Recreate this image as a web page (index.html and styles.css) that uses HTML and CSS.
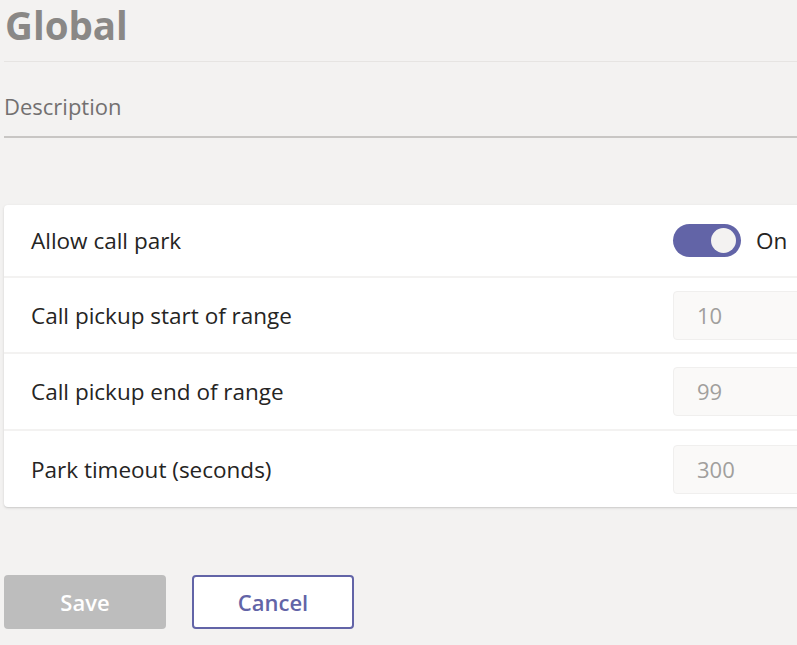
FILE: index.html
```html
<!DOCTYPE html>
<html>
<head>
<meta charset="utf-8">
<link rel="stylesheet" href="styles.css">
</head>
<body>
<div class="page">
  <h1 class="title">Global</h1>
  <div class="rule"></div>
  <div class="desc">Description</div>
  <div class="card">
    <div class="row first">
      <div class="label">Allow call park</div>
      <div class="control">
        <span class="toggle"><span class="knob"></span></span>
        <span class="state">On</span>
      </div>
    </div>
    <div class="row second">
      <div class="label">Call pickup start of range</div>
      <div class="control"><div class="input">10</div></div>
    </div>
    <div class="row">
      <div class="label">Call pickup end of range</div>
      <div class="control"><div class="input">99</div></div>
    </div>
    <div class="row last">
      <div class="label">Park timeout (seconds)</div>
      <div class="control"><div class="input">300</div></div>
    </div>
  </div>
  <div class="actions">
    <button class="btn save">Save</button>
    <button class="btn cancel">Cancel</button>
  </div>
</div>
</body>
</html>
```
FILE: styles.css
```css
html, body {
  margin: 0;
  padding: 0;
  background: #f3f2f1;
  overflow: hidden;
  width: 797px;
  height: 645px;
}
body {
  font-family: "Open Sans", "Noto Sans", sans-serif;
  color: #252423;
}
.page {
  padding-left: 4px;
  width: 793px;
  overflow: hidden;
}
.title {
  margin: 0;
  height: 61px;
  font-size: 38.5px;
  line-height: 50px;
  font-weight: 700;
  color: #8a8886;
  padding-left: 1px;
  box-sizing: border-box;
}
.rule {
  height: 1px;
  background: #e6e4e2;
}
.desc {
  height: 76px;
  box-sizing: border-box;
  padding-top: 29px;
  font-size: 22px;
  line-height: 30px;
  color: #727070;
  border-bottom: 2px solid #c8c6c4;
}
.card {
  margin-top: 67px;
  background: #ffffff;
  border-radius: 4px 0 0 4px;
  box-shadow: 0 1px 3px rgba(0,0,0,0.12), 0 1px 1px rgba(0,0,0,0.06);
  margin-right: -4px;
}
.row {
  display: grid;
  grid-template-columns: 642px 1fr;
  align-items: center;
  height: 77px;
  padding-left: 27px;
  border-bottom: 2px solid #f3f2f1;
  box-sizing: border-box;
  overflow: hidden;
}
.row.first {
  height: 73px;
}
.row.second {
  height: 76px;
}
.row.last {
  border-bottom: none;
  height: 76px;
}
.label {
  font-size: 22.5px;
  color: #252423;
  white-space: nowrap;
}
.control {
  display: flex;
  align-items: center;
}
.toggle {
  flex: none;
  width: 68px;
  height: 33px;
  border-radius: 17px;
  background: #6264a7;
  display: flex;
  align-items: center;
  justify-content: flex-end;
  padding-right: 5px;
  box-sizing: border-box;
}
.knob {
  width: 25px;
  height: 25px;
  border-radius: 50%;
  background: #f3f2f1;
}
.state {
  margin-left: 15px;
  font-size: 22.5px;
  color: #252423;
}
.input {
  flex: none;
  width: 200px;
  height: 49px;
  box-sizing: border-box;
  background: #faf9f8;
  border: 1px solid #f0efee;
  border-radius: 4px;
  padding-left: 23px;
  font-size: 22px;
  line-height: 47px;
  color: #a19f9d;
}
.actions {
  margin-top: 68px;
  display: flex;
  gap: 26px;
}
.btn {
  width: 162px;
  height: 54px;
  border-radius: 4px;
  font-family: "Open Sans", "Noto Sans", sans-serif;
  font-size: 22px;
  font-weight: 600;
  box-sizing: border-box;
}
.save {
  background: #bdbdbd;
  border: none;
  color: #ffffff;
}
.cancel {
  background: #ffffff;
  border: 2px solid #6264a7;
  color: #6264a7;
}
```
